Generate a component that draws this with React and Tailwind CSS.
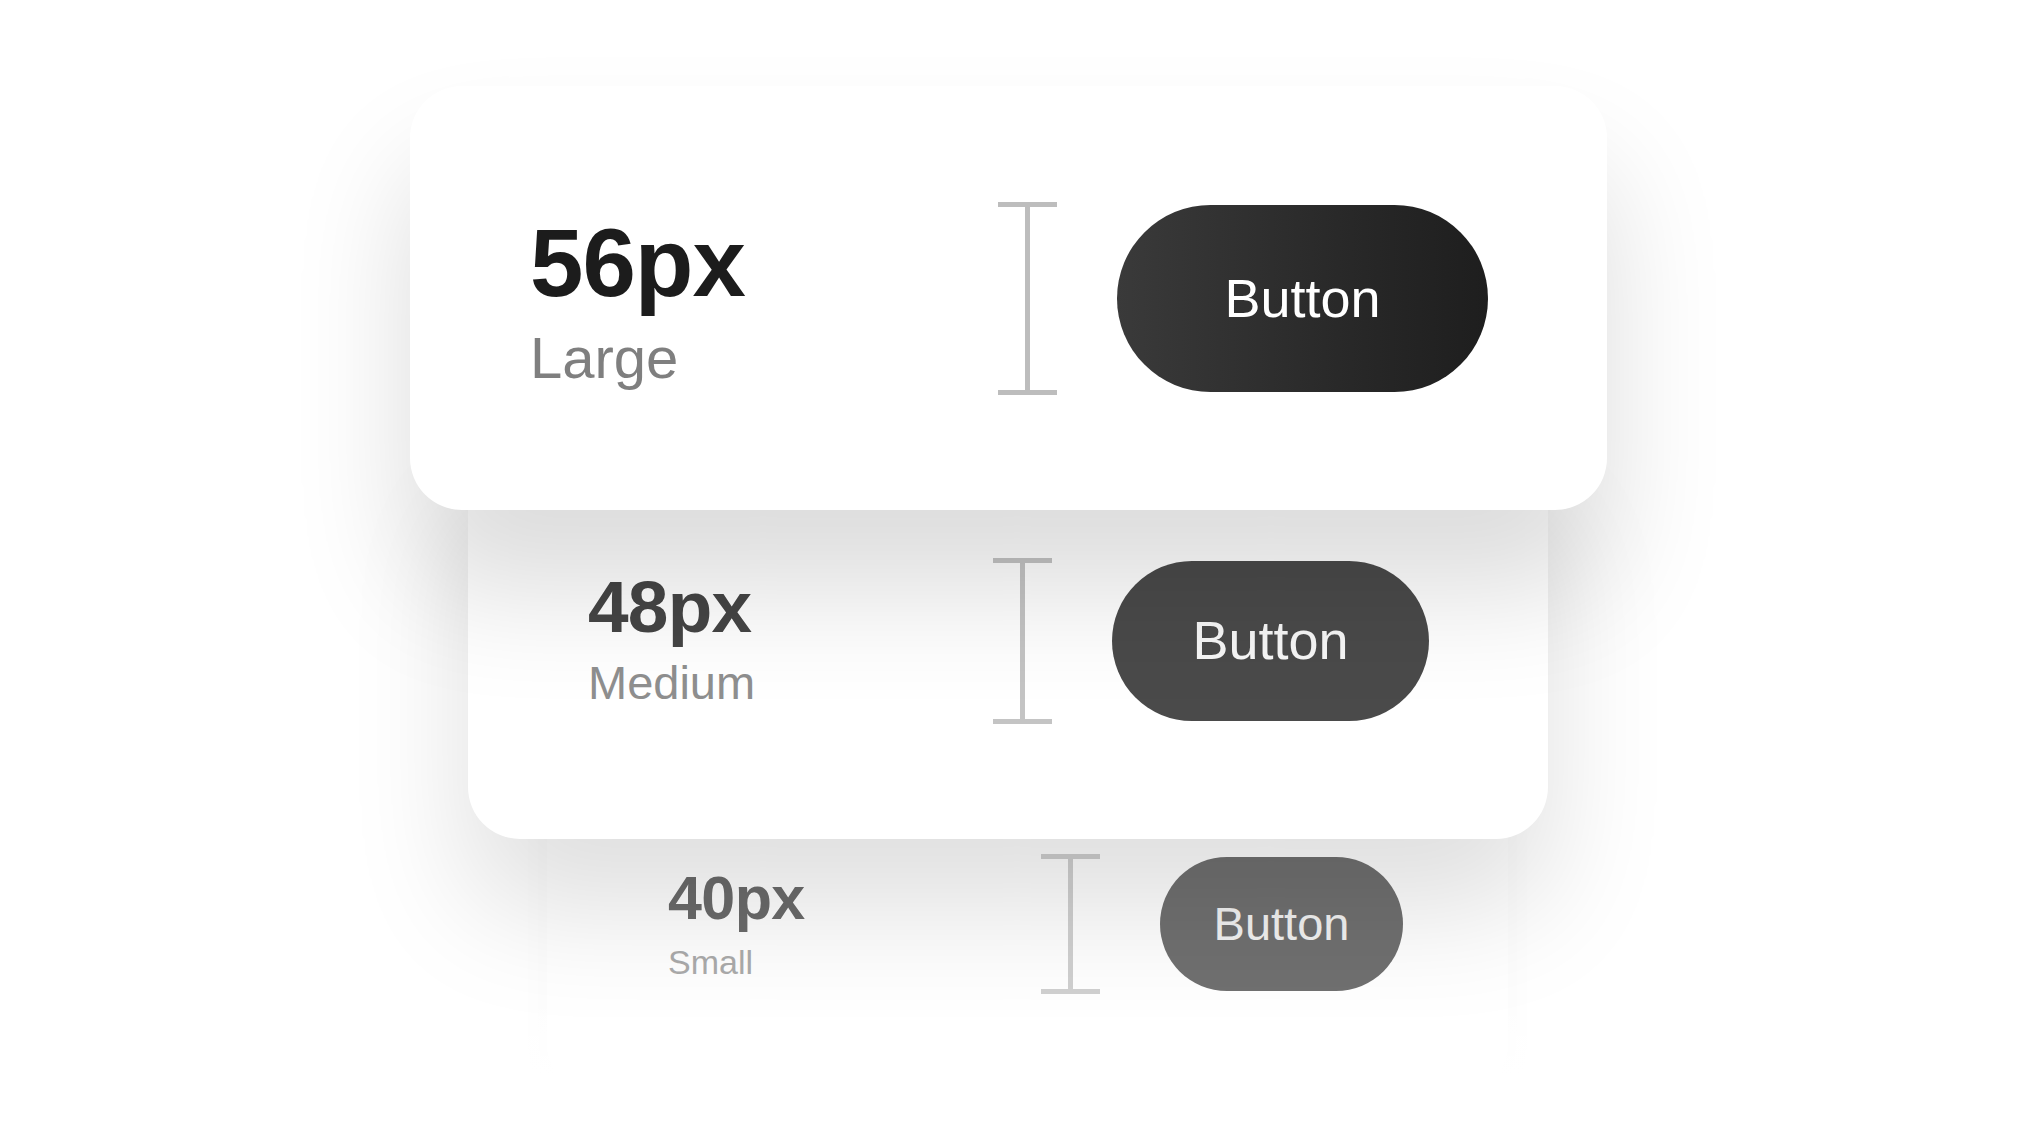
const font = "font-['Liberation_Sans',Arial,Helvetica,sans-serif]";

function Ruler({ color, height }) {
  return (
    <div className={`flex w-[59px] flex-col items-center ${height}`}>
      <div className={`h-[5px] w-[59px] ${color}`} />
      <div className={`w-[5px] flex-1 ${color}`} />
      <div className={`h-[5px] w-[59px] ${color}`} />
    </div>
  );
}

export default function App() {
  return (
    <div className={`relative h-[1124px] w-full overflow-hidden bg-white ${font}`}>
      <div className="flex flex-col items-start pt-[86px]">
        {/* Large */}
        <div className="relative z-30 ml-[410px] flex h-[424px] w-[1197px] items-center rounded-[52px] bg-white pl-[120px] pr-[119px] shadow-[0_80px_120px_rgba(0,0,0,0.14)]">
          <div className="mt-[5px] flex flex-col">
            <span className="text-[96px] font-bold leading-none tracking-[-0.01em] text-[#1c1c1c]">56px</span>
            <span className="mt-[18px] text-[58px] leading-none text-[#7f7f7f]">Large</span>
          </div>
          <div className="ml-auto flex items-center gap-[60px]">
            <Ruler color="bg-[#bdbdbd]" height="h-[193px]" />
            <button className="flex h-[187px] w-[371px] items-center justify-center rounded-full bg-linear-to-r from-[#3a3a3a] to-[#1e1e1e] text-[54px] text-white">
              Button
            </button>
          </div>
        </div>

        {/* Medium */}
        <div className="relative z-20 -mt-[68px] ml-[468px] flex h-[397px] w-[1080px] items-center rounded-[52px] bg-white pl-[120px] pr-[119px] shadow-[0_70px_120px_rgba(0,0,0,0.13)]">
          <div className="-mt-[6px] flex flex-col">
            <span className="text-[73px] font-bold leading-none tracking-[-0.01em] text-[#454545]">48px</span>
            <span className="mt-[16px] text-[47px] leading-none text-[#8f8f8f]">Medium</span>
          </div>
          <div className="ml-auto flex items-center gap-[60px]">
            <Ruler color="bg-[#c4c4c4]" height="h-[166px]" />
            <button className="flex h-[160px] w-[317px] items-center justify-center rounded-full bg-[#4a4a4a] text-[54px] text-[#f7f7f7]">
              Button
            </button>
          </div>
        </div>

        {/* Small */}
        <div className="relative z-10 -mt-[87px] ml-[547px] flex h-[344px] w-[961px] items-center rounded-[52px] bg-white pl-[121px] pr-[105px] shadow-[0_10px_40px_rgba(0,0,0,0.025)]">
          <div className="-mt-[1px] flex flex-col">
            <span className="text-[61px] font-bold leading-none tracking-[-0.01em] text-[#6b6b6b]">40px</span>
            <span className="mt-[16px] text-[34px] leading-none text-[#ababab]">Small</span>
          </div>
          <div className="ml-auto flex items-center gap-[60px]">
            <Ruler color="bg-[#d0d0d0]" height="h-[140px]" />
            <button className="flex h-[134px] w-[243px] items-center justify-center rounded-full bg-[#707070] text-[47px] text-[#f2f2f2]">
              Button
            </button>
          </div>
        </div>
      </div>

      {/* fade at the bottom of the stack */}
      <div className="pointer-events-none absolute inset-x-0 top-[996px] z-40 h-[80px] bg-linear-to-b from-white/0 to-white" />
      <div className="pointer-events-none absolute inset-x-0 top-[1076px] bottom-0 z-40 bg-white" />
    </div>
  );
}
